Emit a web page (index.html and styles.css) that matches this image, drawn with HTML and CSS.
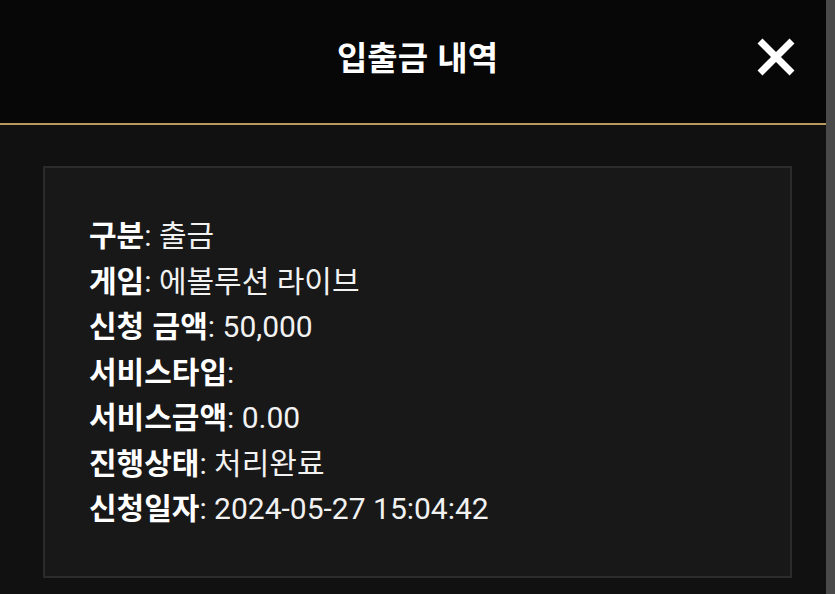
FILE: index.html
```html
<!DOCTYPE html>
<html lang="ko">
<head>
<meta charset="utf-8">
<link rel="stylesheet" href="styles.css">
</head>
<body>
<div class="page">
  <div class="main">
    <header class="header">
      <h1 class="title">입출금 내역</h1>
      <button class="close" aria-label="닫기">
        <svg width="40" height="40" viewBox="0 0 40 40"><path d="M4 4 L36 36 M36 4 L4 36" stroke="#fff" stroke-width="7" stroke-linecap="butt"/></svg>
      </button>
    </header>
    <section class="content">
      <div class="card">
        <p class="row"><b>구분</b>: 출금</p>
        <p class="row"><b>게임</b>: 에볼루션 라이브</p>
        <p class="row"><b>신청 금액</b>: 50,000</p>
        <p class="row"><b>서비스타입</b>:</p>
        <p class="row"><b>서비스금액</b>: 0.00</p>
        <p class="row"><b>진행상태</b>: 처리완료</p>
        <p class="row"><b>신청일자</b>: 2024-05-27 15:04:42</p>
      </div>
    </section>
  </div>
  <div class="scrollbar"></div>
</div>
</body>
</html>
```

FILE: styles.css
```css
* { box-sizing: border-box; }
html, body { margin: 0; padding: 0; height: 100%; }
body {
  background: #111111;
  color: #ffffff;
  font-family: Roboto, "Noto Sans CJK KR", sans-serif;
  overflow: hidden;
}
.page {
  display: flex;
  height: 594px;
}
.main {
  flex: 1;
  display: flex;
  flex-direction: column;
}
.scrollbar {
  width: 9px;
  background: #4a4a4a;
}
.header {
  height: 125px;
  flex: none;
  background: #070707;
  border-bottom: 2px solid #b89a5e;
  display: flex;
  align-items: center;
  justify-content: center;
  position: relative;
}
.title {
  margin: -12px 0 0 9px;
  font-family: "Noto Sans CJK KR", sans-serif;
  font-weight: 700;
  font-size: 33px;
  color: #fff;
}
.close {
  position: absolute;
  right: 30px;
  top: 37px;
  width: 40px;
  height: 40px;
  padding: 0;
  border: 0;
  background: none;
  display: flex;
}
.content {
  flex: 1;
  padding: 41px 34px 0 43px;
}
.card {
  background: #181818;
  border: 2px solid #2b2b2b;
  padding: 43px 44px 46px;
}
.row {
  margin: 0;
  height: 45.5px;
  font-size: 30px;
  line-height: 45.5px;
  color: #f2f2f2;
  white-space: nowrap;
}
.row b {
  font-family: "Noto Sans CJK KR", sans-serif;
  font-weight: 700;
  color: #fff;
}
```
